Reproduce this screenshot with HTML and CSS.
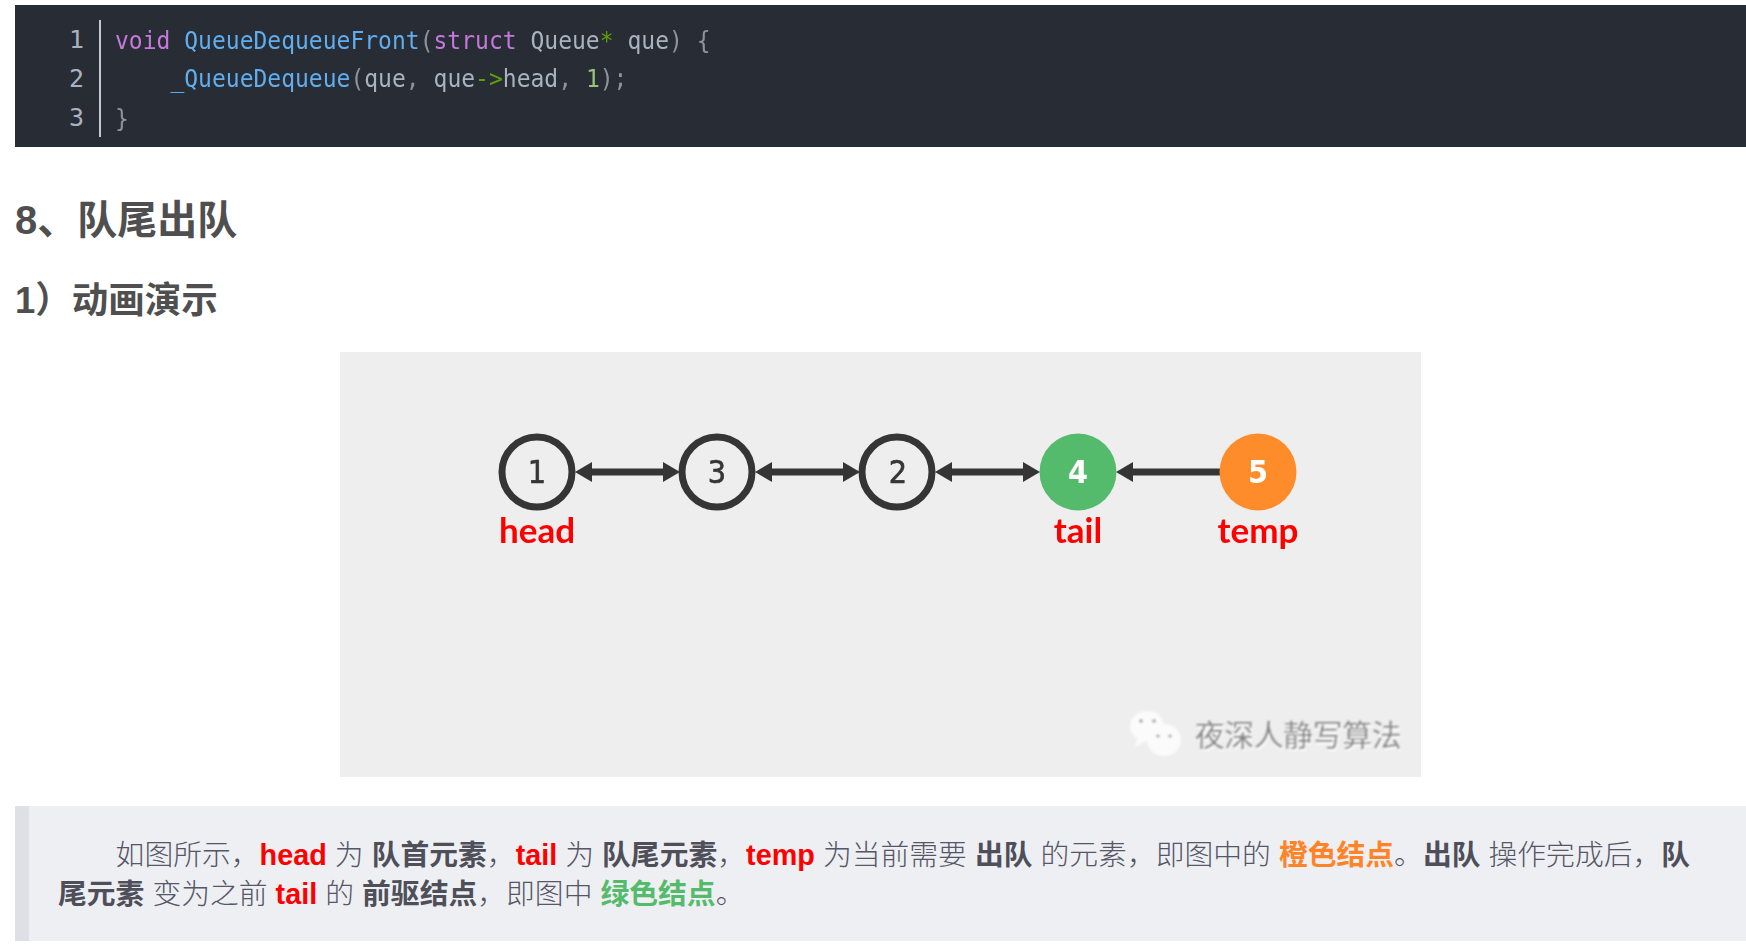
FILE: index.html
```html
<!DOCTYPE html>
<html lang="zh-CN">
<head>
<meta charset="utf-8">
<title>队尾出队</title>
<link rel="stylesheet" href="styles.css">
</head>
<body>
<main class="article">
  <div class="code">
    <div class="gutter"><div>1</div><div>2</div><div>3</div></div>
    <pre class="lines"><code><span class="kw">void</span> <span class="fn">QueueDequeueFront</span><span class="pn">(</span><span class="kw">struct</span> <span class="id">Queue</span><span class="op">*</span> <span class="id">que</span><span class="pn">) {</span>
    <span class="fn">_QueueDequeue</span><span class="pn">(</span><span class="id">que</span><span class="pn">,</span> <span class="id">que</span><span class="op">-&gt;</span><span class="id">head</span><span class="pn">,</span> <span class="num">1</span><span class="pn">);</span>
<span class="pn">}</span></code></pre>
  </div>
  <h2 class="title">8、队尾出队</h2>
  <h3 class="subtitle">1）动画演示</h3>
  <figure class="figure">
    <svg class="diagram" viewBox="0 0 1081 425" width="1081" height="425" role="img" aria-label="队尾出队动画">
      <defs>
        <filter id="soft"><feGaussianBlur stdDeviation="0.5"/></filter>
        <filter id="mark"><feGaussianBlur stdDeviation="1.1"/></filter>
      </defs>
      <g filter="url(#soft)">
        <g class="link">
          <line x1="250" y1="120" x2="325" y2="120"/>
          <line x1="430" y1="120" x2="505" y2="120"/>
          <line x1="611" y1="120" x2="686" y2="120"/>
          <line x1="790" y1="120" x2="880" y2="120"/>
        </g>
        <g class="head">
          <path d="M235 120l17-10v20z"/><path d="M340 120l-17-10v20z"/>
          <path d="M415 120l17-10v20z"/><path d="M520 120l-17-10v20z"/>
          <path d="M595 120l17-10v20z"/><path d="M700 120l-17-10v20z"/>
          <path d="M776 120l17-10v20z"/>
        </g>
        <circle class="node" cx="197" cy="120" r="35"/>
        <circle class="node" cx="377" cy="120" r="35"/>
        <circle class="node" cx="557" cy="120" r="35"/>
        <circle class="fill-green" cx="738" cy="120" r="38.5"/>
        <circle class="fill-orange" cx="918" cy="120" r="38.5"/>
        <text class="digit" x="197" y="131">1</text>
        <text class="digit" x="377" y="131">3</text>
        <text class="digit" x="558" y="131">2</text>
        <text class="digit light" x="738" y="131">4</text>
        <text class="digit light" x="918" y="131">5</text>
        <text class="label" x="197" y="191">head</text>
        <text class="label" x="738" y="191">tail</text>
        <text class="label" x="918" y="191">temp</text>
      </g>
      <g filter="url(#mark)">
        <ellipse class="bubble" cx="807" cy="374" rx="17" ry="15"/>
        <path class="bubble" d="M798 384l-3 11 11-6z"/>
        <ellipse class="bubble" cx="824" cy="388" rx="17" ry="16"/>
        <circle class="eye" cx="801" cy="369" r="1.8"/><circle class="eye" cx="814" cy="369" r="1.8"/>
        <circle class="eye" cx="818" cy="384" r="1.6"/><circle class="eye" cx="830" cy="384" r="1.6"/>
        <text class="mark-shadow" x="856" y="396">夜深人静写算法</text>
        <text class="mark-text" x="855" y="394">夜深人静写算法</text>
      </g>
    </svg>
  </figure>
  <blockquote class="note"><p>如图所示，<span class="red">head</span> 为 <strong>队首元素</strong>，<span class="red">tail</span> 为 <strong>队尾元素</strong>，<span class="red">temp</span> 为当前需要 <strong>出队</strong> 的元素，即图中的 <strong class="orange">橙色结点</strong>。<strong>出队</strong> 操作完成后，<strong>队尾元素</strong> 变为之前 <span class="red">tail</span> 的 <strong>前驱结点</strong>，即图中 <strong class="green">绿色结点</strong>。</p></blockquote>
</main>
</body>
</html>
```

FILE: styles.css
```css
* { box-sizing: border-box; }
html, body { margin: 0; background: #fff; }
body { overflow: hidden; height: 944px; }
.article {
  padding: 5px 0 0 15px;
  font-family: "Liberation Sans", "Noto Sans CJK SC", sans-serif;
  color: #4f4f4f;
}
.code {
  display: flex;
  height: 142px;
  padding-top: 15px;
  background: #282c34;
  font-family: "DejaVu Sans Mono", monospace;
  font-size: 23px;
  line-height: 39px;
  color: #abb2bf;
}
.gutter {
  flex: none;
  width: 86px;
  height: 117px;
  padding-right: 15px;
  border-right: 2px solid #c5c8ce;
  font-size: 25px;
  text-align: right;
}
.lines {
  margin: 0;
  padding: 1px 0 0 14px;
  font: inherit;
  line-height: 35.45px;
  transform: scaleY(1.1);
  transform-origin: 0 0;
}
.lines code { font: inherit; }
.kw { color: #c678dd; }
.fn { color: #61aeee; }
.op { color: #5f9e0a; }
.num { color: #98c379; }
.pn { color: #8f949c; }
.id { color: #abb2bf; }
.title {
  margin: 0;
  padding-top: 49px;
  font-size: 40px;
  line-height: 48px;
  font-weight: 700;
}
.subtitle {
  margin: 0;
  padding-top: 33px;
  font-size: 36.5px;
  line-height: 48px;
  font-weight: 700;
}
.figure {
  display: flex;
  justify-content: center;
  margin: 0;
  padding-top: 27px;
}
.diagram { display: block; background: #eeeeee; }
.link line { stroke: #363636; stroke-width: 7; }
.head path { fill: #363636; }
.node { fill: #eee; stroke: #363636; stroke-width: 7; }
.fill-green { fill: #55bb6c; }
.fill-orange { fill: #ff8c2a; }
.digit {
  font-family: "DejaVu Sans", sans-serif;
  font-size: 32px;
  font-stretch: condensed;
  text-anchor: middle;
  fill: #363636;
  stroke: #363636;
  stroke-width: 0.6;
}
.digit.light { fill: #fff; stroke: none; font-weight: 700; }
.label {
  font-family: "Lato", sans-serif;
  font-size: 35px;
  font-weight: 700;
  text-anchor: middle;
  fill: #ff0000;
}
.bubble { fill: #fbfbfb; }
.eye { fill: #9a9a9a; }
.mark-text, .mark-shadow { font-family: "Noto Sans CJK SC", sans-serif; font-size: 29.5px; }
.mark-text { fill: #858585; }
.mark-shadow { fill: #ffffff; }
.note {
  margin: 29px 0 0;
  height: 135px;
  padding: 30px 28px 0 29px;
  background: #eeeff3;
  border-left: 14px solid #dfe0e6;
  color: #555666;
  font-size: 28.8px;
  font-weight: 300;
  line-height: 39px;
}
.note p { margin: 0; text-indent: 2em; }
.note strong { color: #4f4f5a; font-weight: 700; }
.note .red { color: #ff0000; font-weight: 700; }
.note .orange { color: #ff8427; }
.note .green { color: #55bb6c; }
```
